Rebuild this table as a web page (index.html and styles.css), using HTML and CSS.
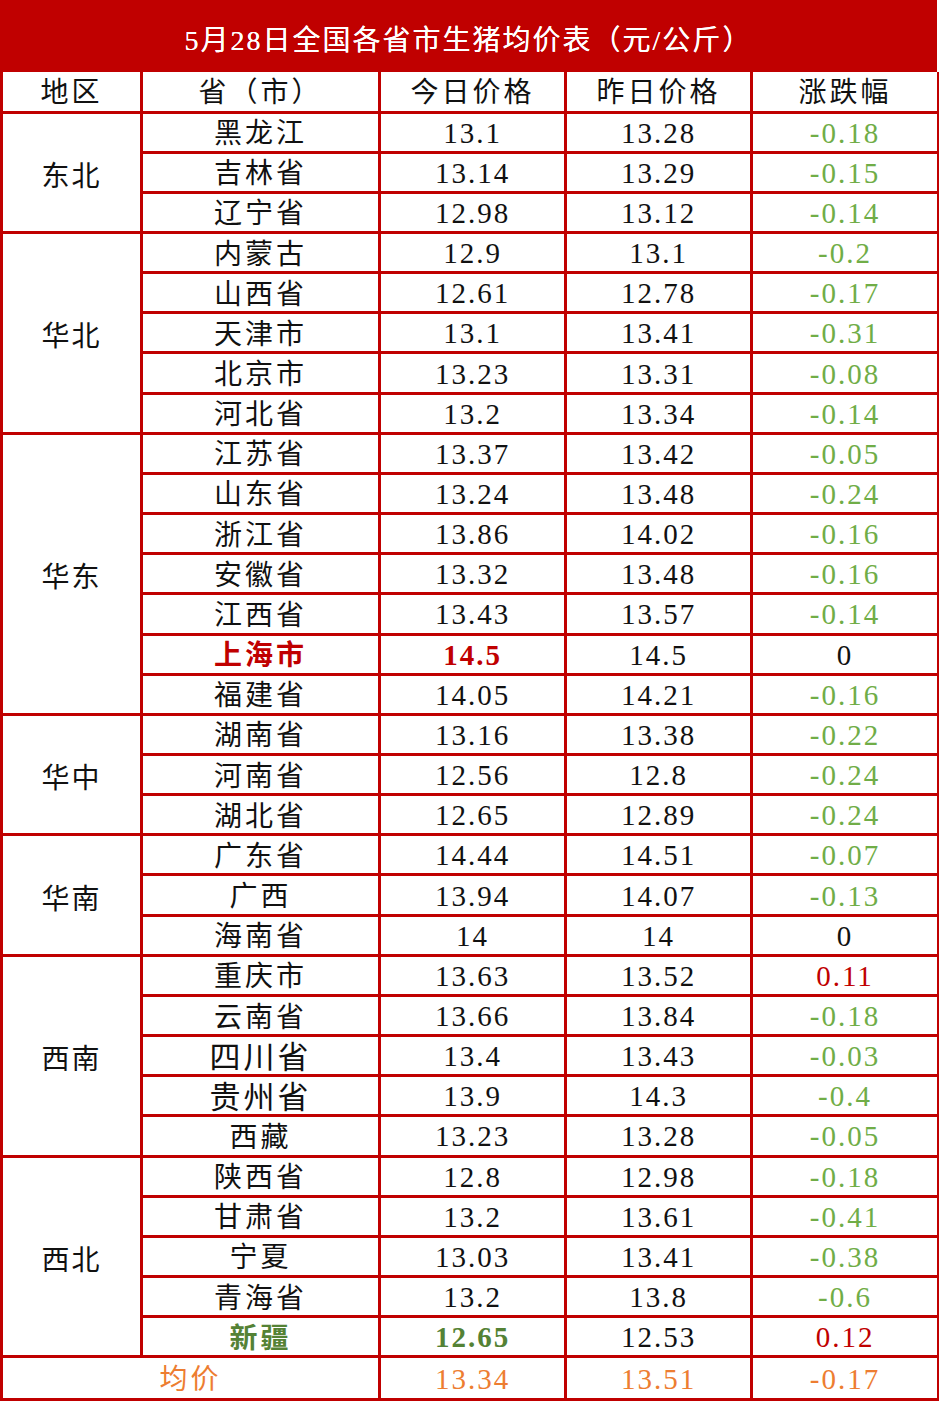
FILE: index.html
```html
<!DOCTYPE html>
<html lang="zh-CN">
<head>
<meta charset="utf-8">
<title>5月28日全国各省市生猪均价表</title>
<link rel="stylesheet" href="styles.css">
</head>
<body>
<div class="sheet">
  <div class="title">5月28日全国各省市生猪均价表（元/公斤）</div>
  <table class="grid">
    <colgroup>
      <col class="c-region"><col class="c-prov"><col class="c-num"><col class="c-num"><col class="c-chg">
    </colgroup>
    <thead>
      <tr class="head"><th>地区</th><th>省（市）</th><th>今日价格</th><th>昨日价格</th><th>涨跌幅</th></tr>
    </thead>
    <tbody>
      <tr><td class="region" rowspan="3">东北</td><td>黑龙江</td><td class="num">13.1</td><td class="num">13.28</td><td class="num down">-0.18</td></tr>
      <tr><td>吉林省</td><td class="num">13.14</td><td class="num">13.29</td><td class="num down">-0.15</td></tr>
      <tr><td>辽宁省</td><td class="num">12.98</td><td class="num">13.12</td><td class="num down">-0.14</td></tr>

      <tr><td class="region" rowspan="5">华北</td><td>内蒙古</td><td class="num">12.9</td><td class="num">13.1</td><td class="num down">-0.2</td></tr>
      <tr><td>山西省</td><td class="num">12.61</td><td class="num">12.78</td><td class="num down">-0.17</td></tr>
      <tr><td>天津市</td><td class="num">13.1</td><td class="num">13.41</td><td class="num down">-0.31</td></tr>
      <tr><td>北京市</td><td class="num">13.23</td><td class="num">13.31</td><td class="num down">-0.08</td></tr>
      <tr><td>河北省</td><td class="num">13.2</td><td class="num">13.34</td><td class="num down">-0.14</td></tr>

      <tr><td class="region" rowspan="7">华东</td><td>江苏省</td><td class="num">13.37</td><td class="num">13.42</td><td class="num down">-0.05</td></tr>
      <tr><td>山东省</td><td class="num">13.24</td><td class="num">13.48</td><td class="num down">-0.24</td></tr>
      <tr><td>浙江省</td><td class="num">13.86</td><td class="num">14.02</td><td class="num down">-0.16</td></tr>
      <tr><td>安徽省</td><td class="num">13.32</td><td class="num">13.48</td><td class="num down">-0.16</td></tr>
      <tr><td>江西省</td><td class="num">13.43</td><td class="num">13.57</td><td class="num down">-0.14</td></tr>
      <tr><td class="hot">上海市</td><td class="num hot">14.5</td><td class="num">14.5</td><td class="num">0</td></tr>
      <tr><td>福建省</td><td class="num">14.05</td><td class="num">14.21</td><td class="num down">-0.16</td></tr>

      <tr><td class="region" rowspan="3">华中</td><td>湖南省</td><td class="num">13.16</td><td class="num">13.38</td><td class="num down">-0.22</td></tr>
      <tr><td>河南省</td><td class="num">12.56</td><td class="num">12.8</td><td class="num down">-0.24</td></tr>
      <tr><td>湖北省</td><td class="num">12.65</td><td class="num">12.89</td><td class="num down">-0.24</td></tr>

      <tr><td class="region" rowspan="3">华南</td><td>广东省</td><td class="num">14.44</td><td class="num">14.51</td><td class="num down">-0.07</td></tr>
      <tr><td>广西</td><td class="num">13.94</td><td class="num">14.07</td><td class="num down">-0.13</td></tr>
      <tr><td>海南省</td><td class="num">14</td><td class="num">14</td><td class="num">0</td></tr>

      <tr><td class="region" rowspan="5">西南</td><td>重庆市</td><td class="num">13.63</td><td class="num">13.52</td><td class="num up">0.11</td></tr>
      <tr><td>云南省</td><td class="num">13.66</td><td class="num">13.84</td><td class="num down">-0.18</td></tr>
      <tr><td class="big">四川省</td><td class="num">13.4</td><td class="num">13.43</td><td class="num down">-0.03</td></tr>
      <tr><td class="big">贵州省</td><td class="num">13.9</td><td class="num">14.3</td><td class="num down">-0.4</td></tr>
      <tr><td>西藏</td><td class="num">13.23</td><td class="num">13.28</td><td class="num down">-0.05</td></tr>

      <tr><td class="region" rowspan="5">西北</td><td>陕西省</td><td class="num">12.8</td><td class="num">12.98</td><td class="num down">-0.18</td></tr>
      <tr><td>甘肃省</td><td class="num">13.2</td><td class="num">13.61</td><td class="num down">-0.41</td></tr>
      <tr><td>宁夏</td><td class="num">13.03</td><td class="num">13.41</td><td class="num down">-0.38</td></tr>
      <tr><td>青海省</td><td class="num">13.2</td><td class="num">13.8</td><td class="num down">-0.6</td></tr>
      <tr><td class="cool">新疆</td><td class="num cool">12.65</td><td class="num">12.53</td><td class="num up">0.12</td></tr>

      <tr class="avg"><td colspan="2">均价</td><td class="num">13.34</td><td class="num">13.51</td><td class="num">-0.17</td></tr>
    </tbody>
  </table>
</div>
</body>
</html>
```
FILE: styles.css
```css
html, body {
  margin: 0;
  padding: 0;
  background: #ffffff;
}

.sheet {
  width: 937px;
  font-family: "Liberation Serif", "Noto Sans CJK SC", serif;
  color: #111111;
}

.title {
  height: 72px;
  background: #c00000;
  color: #ffffff;
  display: flex;
  align-items: center;
  justify-content: center;
  font-size: 28px;
  letter-spacing: 2px;
  padding-top: 4px;
  box-sizing: border-box;
  text-shadow: 0 0 0.4px #ffffff;
}

.grid {
  width: 937px;
  border-collapse: collapse;
  table-layout: fixed;
}

.c-region { width: 140px; }
.c-prov { width: 238px; }
.c-num { width: 186px; }
.c-chg { width: 187px; }

.grid th,
.grid td {
  border: 3px solid #c00000;
  padding: 4px 0 0 0;
  height: 33.16px;
  text-align: center;
  vertical-align: middle;
  font-size: 28px;
  font-weight: normal;
  line-height: 1;
  letter-spacing: 3px;
  white-space: nowrap;
}

.grid .head th {
  border-top: 0;
  height: 34.5px;
}

.grid td.region {
  letter-spacing: 2px;
  padding-top: 9px;
}

.grid td.num {
  font-size: 29px;
  letter-spacing: 2px;
  padding-top: 2px;
  height: 35.16px;
}

.grid td.big {
  font-size: 31px;
}

.grid td.down { color: #70ad47; }
.grid td.up { color: #c00000; }

.grid td.hot {
  color: #c00000;
  font-weight: bold;
}

.grid td.cool {
  color: #548235;
  font-weight: bold;
}

.grid .avg td {
  color: #ed7d31;
  height: 36px;
}

.grid .avg td.num {
  height: 38px;
}
```
